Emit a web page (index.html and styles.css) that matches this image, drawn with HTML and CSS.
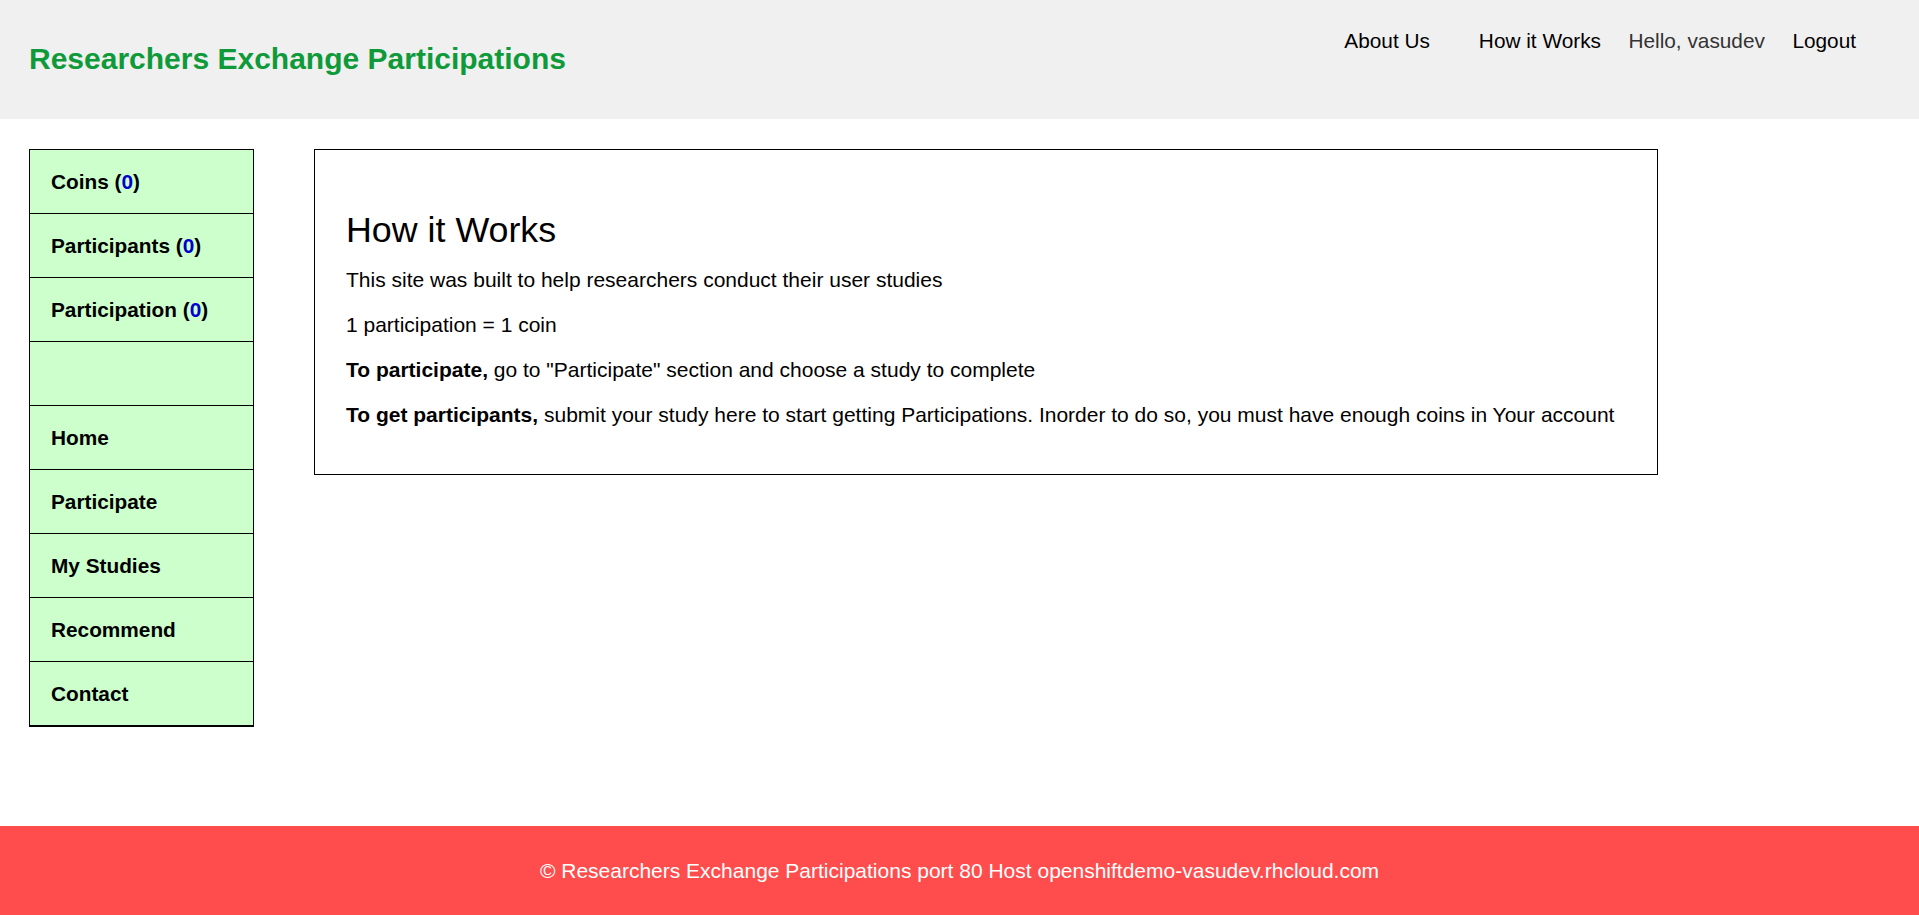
FILE: index.html
```html
<!DOCTYPE html>
<html lang="en">
<head>
<meta charset="utf-8">
<title>How it Works - Researchers Exchange Participations</title>
<link rel="stylesheet" href="styles.css">
</head>
<body>
<header class="topbar">
  <h1 class="brand">Researchers Exchange Participations</h1>
  <nav class="topnav">
    <a class="nav-link nav-about" href="#">About Us</a>
    <a class="nav-link" href="#">How it Works</a>
    <span class="nav-hello">Hello, vasudev</span>
    <a class="nav-link" href="#">Logout</a>
  </nav>
</header>
<div class="main">
  <ul class="sidenav">
    <li class="side-item">Coins (<span class="count">0</span>)</li>
    <li class="side-item">Participants (<span class="count">0</span>)</li>
    <li class="side-item">Participation (<span class="count">0</span>)</li>
    <li class="side-item"></li>
    <li class="side-item">Home</li>
    <li class="side-item">Participate</li>
    <li class="side-item">My Studies</li>
    <li class="side-item">Recommend</li>
    <li class="side-item">Contact</li>
  </ul>
  <section class="card">
    <h2 class="card-title">How it Works</h2>
    <p class="card-text">This site was built to help researchers conduct their user studies</p>
    <p class="card-text">1 participation = 1 coin</p>
    <p class="card-text"><strong>To participate,</strong> go to "Participate" section and choose a study to complete</p>
    <p class="card-text"><strong>To get participants,</strong> submit your study here to start getting Participations. Inorder to do so, you must have enough coins in Your account</p>
  </section>
</div>
<footer class="footer">© Researchers Exchange Participations port 80 Host openshiftdemo-vasudev.rhcloud.com</footer>
</body>
</html>
```
FILE: styles.css
```css
html, body {
  margin: 0;
  padding: 0;
}
body {
  font-family: "Liberation Sans", Arial, sans-serif;
  color: #000;
  background: #fff;
  display: flex;
  flex-direction: column;
  min-height: 100vh;
}
.topbar {
  background: #f0f0f0;
  height: 119px;
  display: flex;
  justify-content: space-between;
  align-items: flex-start;
  padding: 0 63px 0 29px;
  box-sizing: border-box;
}
.brand {
  margin: 42px 0 0;
  font-size: 30px;
  line-height: 34px;
  font-weight: bold;
  color: #0f9a3a;
}
.topnav {
  margin-top: 29px;
  display: flex;
  gap: 27.5px;
  font-size: 20.8px;
  line-height: 24px;
}
.nav-link {
  color: #000;
  text-decoration: none;
}
.nav-about {
  margin-right: 21.5px;
}
.nav-hello {
  color: #333;
}
.main {
  display: flex;
  align-items: flex-start;
  gap: 60px;
  padding: 30px 29px 0;
}
.sidenav {
  list-style: none;
  margin: 0;
  padding: 0;
  width: 225px;
  box-sizing: border-box;
  border: 1px solid #000;
  background: #ccffcc;
  flex-shrink: 0;
}
.side-item {
  height: 63px;
  padding: 0 0 0 21px;
  line-height: 63px;
  border-bottom: 1px solid #000;
  font-size: 20.8px;
  font-weight: bold;
  white-space: nowrap;
}
.count {
  color: #0000cc;
}
.card {
  width: 1344px;
  box-sizing: border-box;
  border: 1px solid #000;
  padding: 60px 31px 26px;
}
.card-title {
  margin: 0 0 18px;
  font-size: 35.8px;
  line-height: 40px;
  font-weight: normal;
}
.card-text {
  margin: 0 0 21px;
  font-size: 21px;
  line-height: 24px;
}
.footer {
  margin-top: auto;
  height: 89px;
  background: #ff4d4d;
  color: #fff;
  text-align: center;
  font-size: 21px;
  line-height: 89px;
}
```
